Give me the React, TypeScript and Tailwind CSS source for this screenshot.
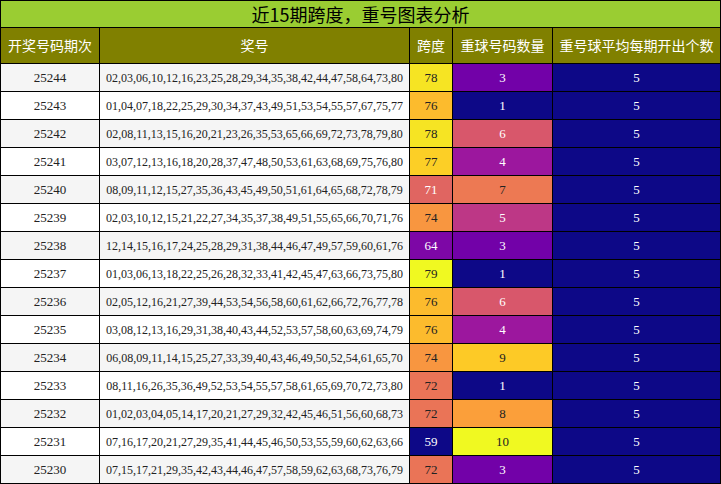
const rows: [string, string, number, number][] = [
  ["25244", "02,03,06,10,12,16,23,25,28,29,34,35,38,42,44,47,58,64,73,80", 78, 3],
  ["25243", "01,04,07,18,22,25,29,30,34,37,43,49,51,53,54,55,57,67,75,77", 76, 1],
  ["25242", "02,08,11,13,15,16,20,21,23,26,35,53,65,66,69,72,73,78,79,80", 78, 6],
  ["25241", "03,07,12,13,16,18,20,28,37,47,48,50,53,61,63,68,69,75,76,80", 77, 4],
  ["25240", "08,09,11,12,15,27,35,36,43,45,49,50,51,61,64,65,68,72,78,79", 71, 7],
  ["25239", "02,03,10,12,15,21,22,27,34,35,37,38,49,51,55,65,66,70,71,76", 74, 5],
  ["25238", "12,14,15,16,17,24,25,28,29,31,38,44,46,47,49,57,59,60,61,76", 64, 3],
  ["25237", "01,03,06,13,18,22,25,26,28,32,33,41,42,45,47,63,66,73,75,80", 79, 1],
  ["25236", "02,05,12,16,21,27,39,44,53,54,56,58,60,61,62,66,72,76,77,78", 76, 6],
  ["25235", "03,08,12,13,16,29,31,38,40,43,44,52,53,57,58,60,63,69,74,79", 76, 4],
  ["25234", "06,08,09,11,14,15,25,27,33,39,40,43,46,49,50,52,54,61,65,70,80", 74, 9],
  ["25233", "08,11,16,26,35,36,49,52,53,54,55,57,58,61,65,69,70,72,73,80", 72, 1],
  ["25232", "01,02,03,04,05,14,17,20,21,27,29,32,42,45,46,51,56,60,68,73", 72, 8],
  ["25231", "07,16,17,20,21,27,29,35,41,44,45,46,50,53,55,59,60,62,63,66", 59, 10],
  ["25230", "07,15,17,21,29,35,42,43,44,46,47,57,58,59,62,63,68,73,76,79", 72, 3],
];

const plasma = [
  [13, 8, 135], [84, 2, 163], [114, 1, 168], [156, 23, 158], [189, 55, 134],
  [216, 87, 107], [237, 121, 83], [251, 159, 58], [253, 202, 38], [240, 249, 33],
];

function color(t: number) {
  const x = Math.max(0, Math.min(1, t)) * (plasma.length - 1);
  const i = Math.min(Math.floor(x), plasma.length - 2);
  const f = x - i;
  const c = plasma[i].map((v, k) => Math.round(v + (plasma[i + 1][k] - v) * f));
  return { bg: `rgb(${c.join(",")})`, light: t > 0.6 };
}

const cell = "border border-black text-center p-0";

export default function App() {
  return (
    <div className="w-[721px] h-[484px] overflow-hidden bg-white text-[13px] text-[#222]" style={{ fontFamily: '"Liberation Serif", "Noto Sans CJK SC", serif' }}>
      <table className="w-full border-collapse table-fixed">
        <colgroup>
          <col className="w-[99px]" />
          <col className="w-[310px]" />
          <col className="w-[43px]" />
          <col className="w-[100px]" />
          <col />
        </colgroup>
        <thead>
          <tr className="h-[27px]">
            <th colSpan={5} className="border border-black bg-[#9acd32] text-[18px] leading-[25px] p-0 font-normal text-black" style={{ fontFamily: '"Noto Sans CJK SC", sans-serif' }}>
              近15期跨度，重号图表分析
            </th>
          </tr>
          <tr className="h-[36px] bg-[#808000] text-white text-[14px]" style={{ fontFamily: '"Noto Sans CJK SC", sans-serif' }}>
            <th className={cell + " font-normal"}>开奖号码期次</th>
            <th className={cell + " font-normal"}>奖号</th>
            <th className={cell + " font-normal"}>跨度</th>
            <th className={cell + " font-normal"}>重球号码数量</th>
            <th className={cell + " font-normal"}>重号球平均每期开出个数</th>
          </tr>
        </thead>
        <tbody>
          {rows.map(([p, nums, span, cnt], i) => {
            const s = color((span - 59) / 20);
            const c = color((cnt - 1) / 9);
            return (
              <tr key={p} className={"h-[28px] leading-[16px] " + (i % 2 === 0 ? "bg-[#f5f5f5]" : "bg-white")}>
                <td className={cell}>{p}</td>
                <td className={cell + " text-[12px] whitespace-nowrap overflow-hidden"}>{nums.split(",").slice(0, 20).join(",")}</td>
                <td className={cell + (s.light ? " text-[#222]" : " text-white")} style={{ background: s.bg }}>{span}</td>
                <td className={cell + (c.light ? " text-[#222]" : " text-white")} style={{ background: c.bg }}>{cnt}</td>
                <td className={cell + " bg-[#0d0887] text-white"}>5</td>
              </tr>
            );
          })}
        </tbody>
      </table>
    </div>
  );
}
